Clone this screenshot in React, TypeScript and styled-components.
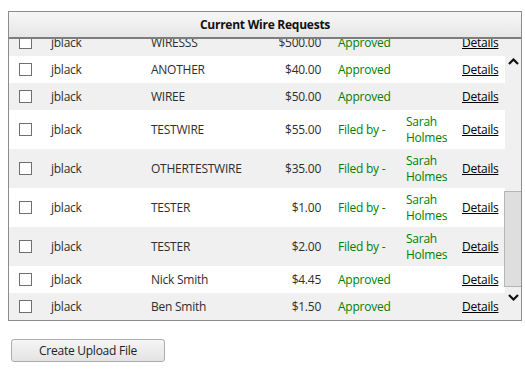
import React, { useLayoutEffect, useRef } from 'react';
import styled, { createGlobalStyle } from 'styled-components';

type WireRequest = {
  user: string;
  description: string;
  amount: string;
  status: 'Approved' | 'Filed by -';
  filedBy?: string;
};

const requests: WireRequest[] = [
  { user: 'jblack', description: 'WIRESSS', amount: '$500.00', status: 'Approved' },
  { user: 'jblack', description: 'ANOTHER', amount: '$40.00', status: 'Approved' },
  { user: 'jblack', description: 'WIREE', amount: '$50.00', status: 'Approved' },
  { user: 'jblack', description: 'TESTWIRE', amount: '$55.00', status: 'Filed by -', filedBy: 'Sarah Holmes' },
  { user: 'jblack', description: 'OTHERTESTWIRE', amount: '$35.00', status: 'Filed by -', filedBy: 'Sarah Holmes' },
  { user: 'jblack', description: 'TESTER', amount: '$1.00', status: 'Filed by -', filedBy: 'Sarah Holmes' },
  { user: 'jblack', description: 'TESTER', amount: '$2.00', status: 'Filed by -', filedBy: 'Sarah Holmes' },
  { user: 'jblack', description: 'Nick Smith', amount: '$4.45', status: 'Approved' },
  { user: 'jblack', description: 'Ben Smith', amount: '$1.50', status: 'Approved' },
];

const GlobalStyle = createGlobalStyle`
  body {
    margin: 0;
    background: #fff;
    font-family: "Open Sans", "Liberation Sans", sans-serif;
    font-size: 12px;
    letter-spacing: -0.25px;
    color: #333;
  }
`;

const Page = styled.div`
  padding: 11px 4px 0 8px;
  width: 525px;
  box-sizing: border-box;
`;

const Panel = styled.div`
  width: 514px;
  border: 1px solid #8c8c8c;
  box-sizing: border-box;
  display: flex;
  flex-direction: column;
`;

const Header = styled.div`
  height: 25px;
  display: flex;
  align-items: center;
  justify-content: center;
  font-weight: bold;
  color: #111;
  background: linear-gradient(#f7f7f7, #e6e6e6);
  border-bottom: 2px solid #7d7d7d;
`;

const Body = styled.div`
  display: flex;
  height: 281px;
`;

const Rows = styled.div`
  flex: 1;
  overflow-y: scroll;
  scrollbar-width: none;
  &::-webkit-scrollbar {
    display: none;
  }
`;

const Row = styled.div<{ $striped: boolean }>`
  display: grid;
  grid-template-columns: 42px 100px 112px 58px 85px 56px 1fr;
  align-items: center;
  min-height: 27px;
  padding: 3.5px 0;
  box-sizing: border-box;
  line-height: 16px;
  background: ${(p) => (p.$striped ? '#f0f0f0' : '#fff')};
`;

const Check = styled.span`
  width: 11px;
  height: 11px;
  margin-left: 10px;
  border: 1px solid #6f6f6f;
  background: #fff;
`;

const Cell = styled.span`
  color: #2e2e2e;
`;

const Amount = styled.span`
  text-align: right;
  color: #2e2e2e;
`;

const Status = styled.span`
  padding-left: 17px;
  color: #008000;
`;

const FiledBy = styled.span`
  color: #008000;
`;

const DetailsLink = styled.a`
  color: #000;
  text-decoration: underline;
  cursor: pointer;
`;

const ScrollBar = styled.div`
  width: 16px;
  background: #f0f0f0;
  display: flex;
  flex-direction: column;
  padding: 14px 0;
  box-sizing: border-box;
`;

const ArrowButton = styled.div`
  height: 17px;
  display: flex;
  align-items: center;
  justify-content: center;
`;

const Track = styled.div`
  flex: 1;
  display: flex;
  flex-direction: column;
  justify-content: flex-end;
  padding-bottom: 2px;
`;

const Thumb = styled.div`
  height: 96px;
  margin-left: -1px;
  background: #dedede;
  border: 1px solid #b5b5b5;
  border-right: none;
  box-sizing: border-box;
`;

const UploadButton = styled.button`
  margin: 18px 0 0 3px;
  width: 154px;
  height: 23px;
  font-family: "Open Sans", "Liberation Sans", sans-serif;
  font-size: 12px;
  letter-spacing: -0.25px;
  color: #222;
  border: 1px solid #acacac;
  border-radius: 3px;
  background: linear-gradient(#f5f5f5, #e3e3e3);
  padding: 0;
`;

const Chevron: React.FC<{ up?: boolean }> = ({ up }) => (
  <svg width="11" height="7" viewBox="0 0 11 7">
    <polyline
      points={up ? '1,6 5.5,1.5 10,6' : '1,1 5.5,5.5 10,1'}
      fill="none"
      stroke="#111"
      strokeWidth="2.2"
    />
  </svg>
);

const App: React.FC = () => {
  const rowsRef = useRef<HTMLDivElement>(null);

  // list is shown scrolled to the bottom
  useLayoutEffect(() => {
    if (rowsRef.current) {
      rowsRef.current.scrollTop = rowsRef.current.scrollHeight;
    }
  }, []);

  return (
    <Page>
      <GlobalStyle />
      <Panel>
        <Header>Current Wire Requests</Header>
        <Body>
          <Rows ref={rowsRef}>
            {requests.map((r, i) => (
              <Row key={i} $striped={(requests.length - 1 - i) % 2 === 0}>
                <Check />
                <Cell>{r.user}</Cell>
                <Cell>{r.description}</Cell>
                <Amount>{r.amount}</Amount>
                <Status>{r.status}</Status>
                <FiledBy>{r.filedBy}</FiledBy>
                <DetailsLink>Details</DetailsLink>
              </Row>
            ))}
          </Rows>
          <ScrollBar>
            <ArrowButton>
              <Chevron up />
            </ArrowButton>
            <Track>
              <Thumb />
            </Track>
            <ArrowButton>
              <Chevron />
            </ArrowButton>
          </ScrollBar>
        </Body>
      </Panel>
      <UploadButton>Create Upload File</UploadButton>
    </Page>
  );
};

export default App;
